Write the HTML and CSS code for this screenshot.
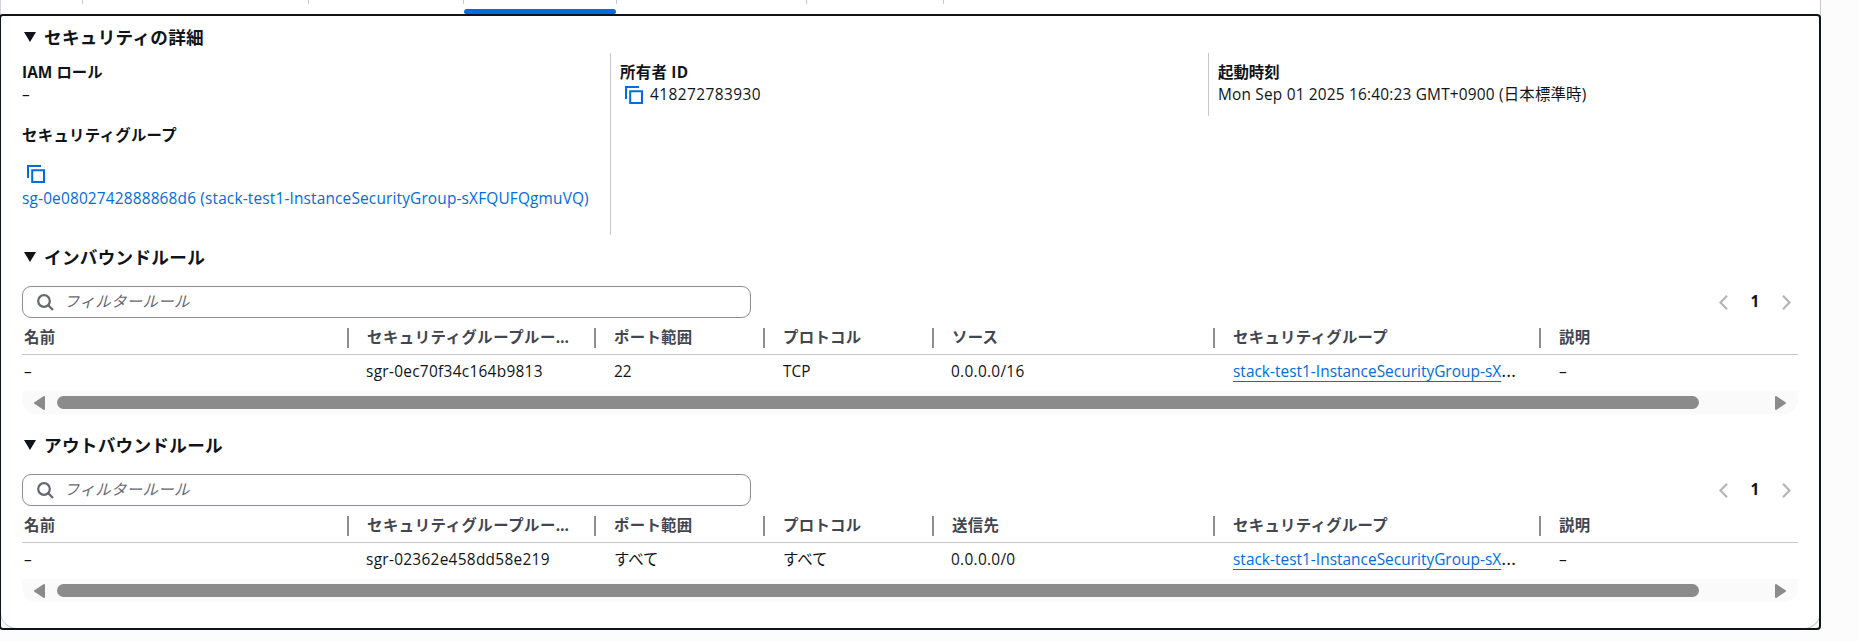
FILE: index.html
```
<!DOCTYPE html>
<html lang="ja">
<head>
<meta charset="utf-8">
<title>セキュリティ</title>
<link rel="stylesheet" href="styles.css">
</head>
<body>
<svg width="0" height="0" class="defs">
  <symbol id="copy" viewBox="0 0 18 18"><path d="M1 13V1h13M5.2 5.2H17V17H5.2z" fill="none" stroke="currentColor" stroke-width="2"/></symbol>
  <symbol id="search" viewBox="0 0 17 17"><circle cx="7" cy="7" r="5.8" fill="none" stroke="currentColor" stroke-width="2.2"/><path d="M11 11l5 5" fill="none" stroke="currentColor" stroke-width="2.3"/></symbol>
  <symbol id="prev" viewBox="0 0 9 15"><path d="M8 .8L1.5 7.5 8 14.2" fill="none" stroke="currentColor" stroke-width="2.2"/></symbol>
  <symbol id="next" viewBox="0 0 9 15"><path d="M1 .8l6.500 6.700L1 14.200" fill="none" stroke="currentColor" stroke-width="2.2"/></symbol>
  <symbol id="left" viewBox="0 0 11 14"><path d="M10 1v12L1 7z" fill="currentColor" stroke="currentColor" stroke-width="2" stroke-linejoin="round"/></symbol>
  <symbol id="right" viewBox="0 0 11 14"><path d="M1 1v12L10 7z" fill="currentColor" stroke="currentColor" stroke-width="2" stroke-linejoin="round"/></symbol>
</svg>
<main class="container">
  <nav class="tabs">
    <span class="tab tab-a"></span><span class="tab tab-b"></span><span class="tab tab-c"></span><span class="tab tab-active"></span><span class="tab tab-d"></span><span class="tab tab-e"></span>
  </nav>
  <div class="panel">
    <h2 class="heading"><i class="caret"></i>セキュリティの詳細</h2>
    <div class="details">
      <div class="detail">
        <h3 class="label label-role">IAM ロール</h3>
        <p class="value">–</p>
        <h3 class="label label-group">セキュリティグループ</h3>
        <svg class="copy copy-group"><use href="#copy"/></svg>
        <a class="group-link">sg-0e0802742888868d6 (stack-test1-InstanceSecurityGroup-sXFQUFQgmuVQ)</a>
      </div>
      <div class="detail divided">
        <h3 class="label">所有者 ID</h3>
        <p class="value owner"><svg class="copy"><use href="#copy"/></svg>418272783930</p>
      </div>
      <div class="detail divided short">
        <h3 class="label label-time">起動時刻</h3>
        <p class="value time">Mon Sep 01 2025 16:40:23 GMT+0900 (日本標準時)</p>
      </div>
    </div>
    <section class="rules">
      <h2 class="heading"><i class="caret"></i>インバウンドルール</h2>
      <div class="tools">
        <div class="filter"><svg class="search"><use href="#search"/></svg>フィルタールール</div>
        <div class="pages"><svg class="chevron"><use href="#prev"/></svg><b class="page">1</b><svg class="chevron"><use href="#next"/></svg></div>
      </div>
      <div class="row head"><span>名前</span><span class="clipped">セキュリティグループルー…</span><span>ポート範囲</span><span>プロトコル</span><span>ソース</span><span>セキュリティグループ</span><span>説明</span></div>
      <div class="row data"><span>–</span><span class="rule-id">sgr-0ec70f34c164b9813</span><span>22</span><span>TCP</span><span class="cidr">0.0.0.0/16</span><span><a class="link">stack-test1-InstanceSecurityGroup-sX</a><i class="dots">…</i></span><span>–</span></div>
      <div class="scroll"><svg class="arrow"><use href="#left"/></svg><div class="thumb"></div><svg class="arrow"><use href="#right"/></svg></div>
    </section>
    <section class="rules">
      <h2 class="heading"><i class="caret"></i>アウトバウンドルール</h2>
      <div class="tools">
        <div class="filter"><svg class="search"><use href="#search"/></svg>フィルタールール</div>
        <div class="pages"><svg class="chevron"><use href="#prev"/></svg><b class="page">1</b><svg class="chevron"><use href="#next"/></svg></div>
      </div>
      <div class="row head"><span>名前</span><span class="clipped">セキュリティグループルー…</span><span>ポート範囲</span><span>プロトコル</span><span>送信先</span><span>セキュリティグループ</span><span>説明</span></div>
      <div class="row data"><span>–</span><span class="rule-id">sgr-02362e458dd58e219</span><span>すべて</span><span>すべて</span><span class="cidr">0.0.0.0/0</span><span><a class="link">stack-test1-InstanceSecurityGroup-sX</a><i class="dots">…</i></span><span>–</span></div>
      <div class="scroll"><svg class="arrow"><use href="#left"/></svg><div class="thumb"></div><svg class="arrow"><use href="#right"/></svg></div>
    </section>
  </div>
</main>
</body>
</html>
```
FILE: styles.css
```
* { box-sizing: border-box; margin: 0; padding: 0; }
body {
  background: #fcfcfd;
  color: #0f141a;
  font: 15.4px/22px "Open Sans", "Noto Sans CJK JP", sans-serif;
  height: 641px;
  overflow: hidden;
}
.defs { display: block; height: 0; }
.container {
  width: 1821px;
  height: 629px;
  background: #fff;
  border: 1px solid #c6c6cd;
  border-top: 0;
  border-left-color: #d4d4da;
  border-radius: 0 0 17px 17px;
}
.tabs { display: flex; height: 14px; }
.tab { height: 4px; border-right: 1px solid #c6c6cd; }
.tab-a { width: 82px; }
.tab-b { width: 226px; }
.tab-c { width: 155px; }
.tab-active { width: 153px; height: 14px; border: 0; background: linear-gradient(#c6c6cd, #c6c6cd) right top / 1px 4px no-repeat; padding-top: 9px; }
.tab-active::after { content: ""; display: block; width: 152px; height: 5px; background: #006ce0; border-radius: 3px 3px 2px 2px; }
.tab-d { width: 190px; }
.tab-e { width: 137px; }
.panel {
  width: 1822px;
  height: 616px;
  margin-left: -2px;
  padding: 8px 21px 0;
  border: 2px solid #0f141a;
  border-radius: 4px;
}
.heading { display: flex; align-items: center; gap: 8px; height: 26px; padding-left: 2px; font-size: 17.6px; line-height: 26px; font-weight: 700; letter-spacing: .3px; }
.caret { width: 12px; height: 10px; background: #0f141a; clip-path: polygon(0 0, 100% 0, 50% 100%); }
.details { display: grid; grid-template-columns: 588px 598px 1fr; height: 182px; margin-top: 3px; }
.detail { padding-top: 9px; }
.divided { border-left: 1px solid #c6c6cd; padding-left: 9px; }
.short { height: 63px; }
.label { font-size: 15.4px; line-height: 22px; font-weight: 700; letter-spacing: .3px; }
.label-role { letter-spacing: .05px; }
.label-time { letter-spacing: 0; }
.value { line-height: 22px; height: 22px; }
.time { letter-spacing: .2px; }
.label-group { margin-top: 19px; }
.copy { width: 18px; height: 18px; color: #006ce0; }
.copy-group { display: block; margin: 18px 0 0 5px; }
.group-link { display: block; color: #006ce0; margin-top: 5px; white-space: nowrap; letter-spacing: .17px; }
.owner { display: flex; align-items: center; gap: 7px; padding-left: 5px; letter-spacing: .45px; }
.rules { height: 188px; padding-top: 9px; width: 1776px; }
.tools { display: flex; justify-content: space-between; margin-top: 16px; height: 32px; }
.filter { display: flex; align-items: center; gap: 10px; width: 729px; height: 32px; padding-left: 14px; border: 1px solid #8c8c94; border-radius: 9px; color: #656871; font-style: italic; letter-spacing: .35px; }
.search { width: 17px; height: 17px; }
.pages { display: flex; align-items: center; padding-right: 7px; }
.chevron { width: 9px; height: 15px; color: #b4b4bb; }
.page { width: 54px; text-align: center; }
.row { display: grid; grid-template-columns: 325px 247px 169px 169px 281px 326px 259px; white-space: nowrap; }
.row span { padding-left: 20px; }
.row span:first-child { padding-left: 2px; }
.head { height: 37px; padding-top: 10px; border-bottom: 1px solid #c6c6cd; color: #424650; font-weight: 700; letter-spacing: .3px; }
.head span { height: 20px; line-height: 20px; border-left: 2px solid #8c8c94; padding-left: 18px; }
.head span:first-child { border: 0; }
.head .clipped { letter-spacing: .5px; }
.data { height: 36px; padding-top: 6px; }
.data .rule-id { padding-left: 19px; letter-spacing: .3px; }
.data .cidr { padding-left: 19px; letter-spacing: .3px; }
.link { color: #006ce0; text-decoration: underline; text-decoration-thickness: 1px; text-underline-offset: 4px; letter-spacing: .03px; }
.dots { font-size: 19px; line-height: 16px; font-style: normal; }
.scroll { display: flex; align-items: center; height: 23px; padding: 0 12px; background: #fafafa; border-radius: 0 0 14px 14px; color: #8b8b8b; }
.arrow { width: 11px; height: 14px; }
.thumb { width: 1642px; height: 13px; margin: 0 76px 0 12px; border-radius: 7px; background: #8b8b8b; }
```
